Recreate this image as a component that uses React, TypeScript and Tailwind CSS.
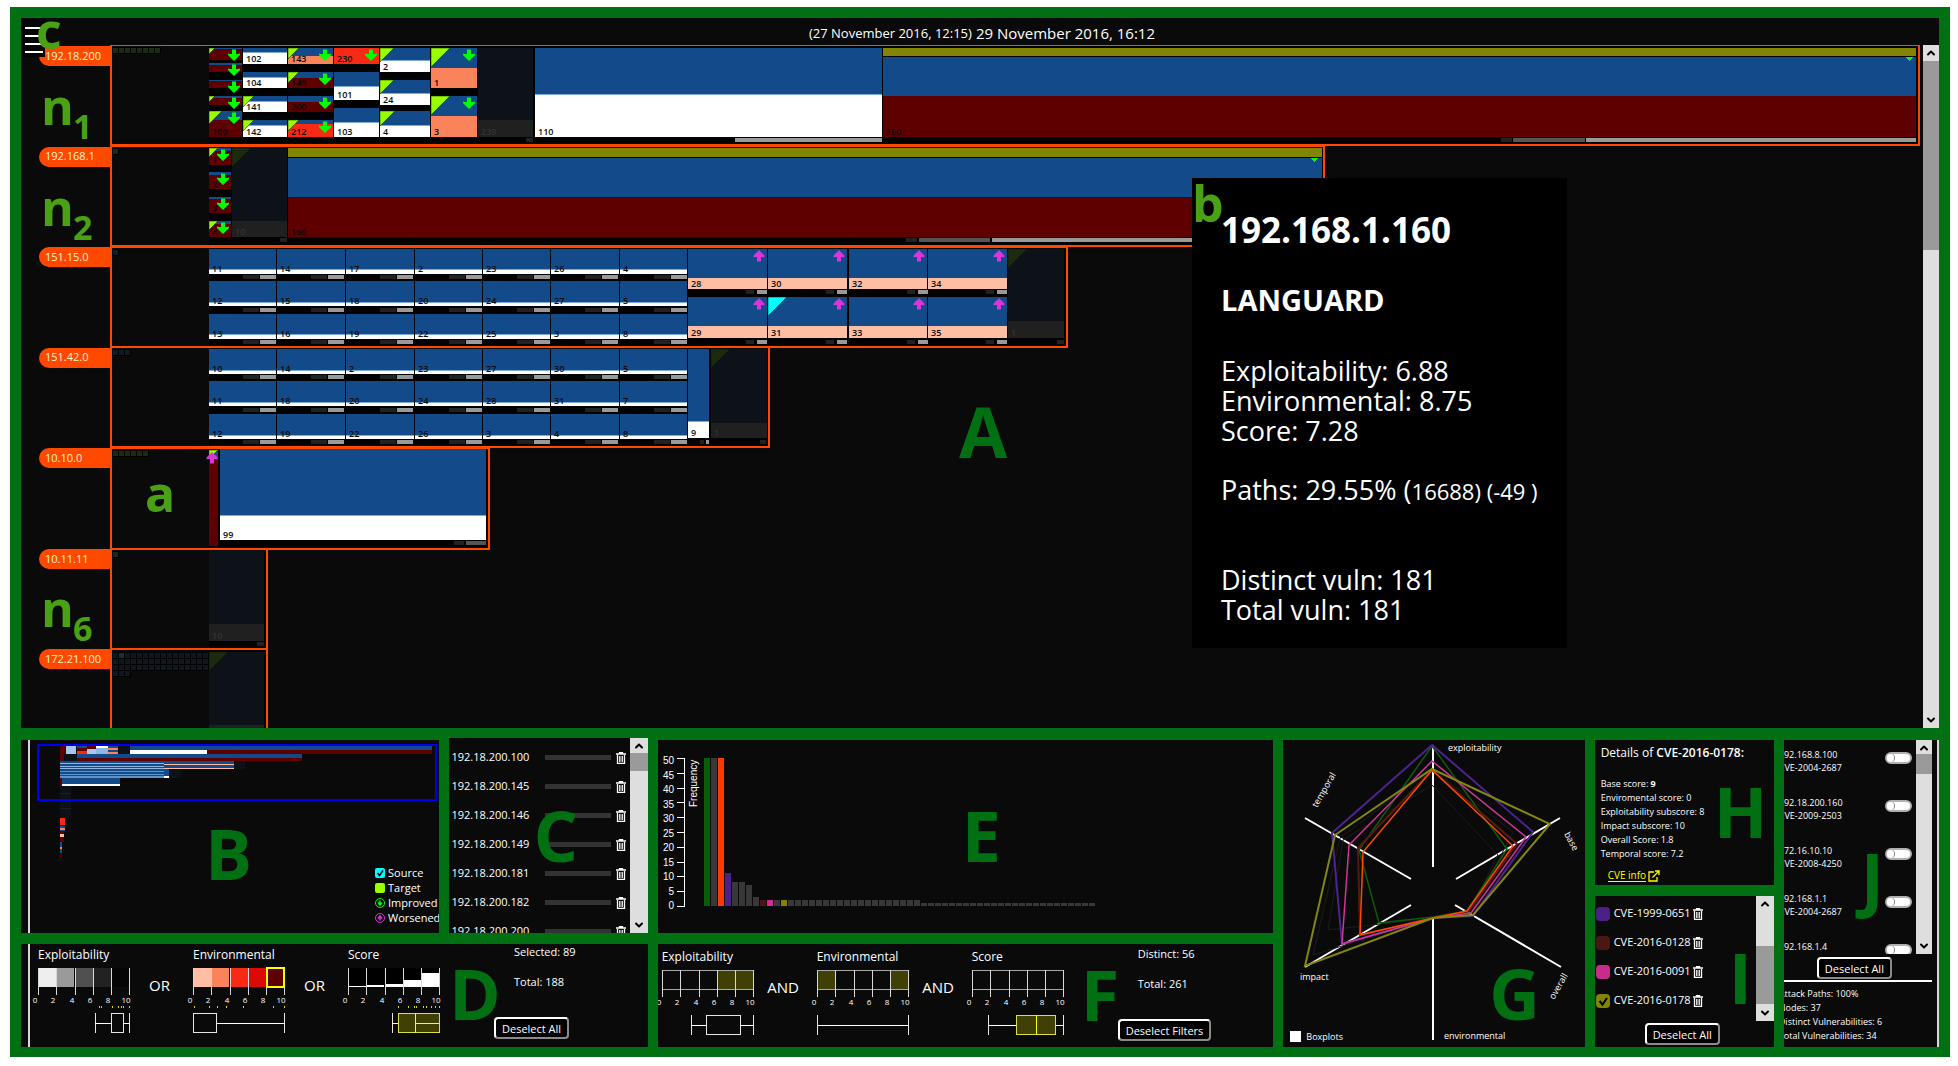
import React from "react";
import { ChevronUp, ChevronDown } from "lucide-react";

const BLUE = "#124a8a";
const DRED = "#5e0000";
const WHITE = "#ffffff";
const SALMON = "#fb835c";
const PEACH = "#ffbda3";
const RED = "#f92a14";
const LIME = "#99ff00";
const CYAN = "#00ffff";
const OLIVE = "#838304";

type Cell = {
  x: number; y: number; r: number; b: number; split: number; fill: string;
  label?: string; tri?: string; ts?: number; arrow?: "up" | "down"; faded?: boolean;
};

const c = (x: number, r: number, y: number, b: number, split: number, fill: string, label?: string, extra: Partial<Cell> = {}): Cell => ({ x, r, y, b, split, fill, label, ...extra });

const grid3 = (tops: number[], splits: number[], labels: string[][]): Cell[] =>
  labels.flatMap((col, i) => {
    const xs = [209, 277, 346, 415, 483, 551, 620, 688];
    return col.map((l, j) => c(xs[i], xs[i + 1] - 1, tops[j], tops[j] + 25, splits[j], WHITE, l));
  });

const cells: Cell[] = [
  c(209, 242, 48, 60, 49, DRED, undefined, { tri: LIME, ts: 6, arrow: "down" }),
  c(209, 242, 63, 72, 65, DRED, undefined, { arrow: "down" }),
  c(209, 242, 80, 88, 81, DRED, undefined, { arrow: "down" }),
  c(209, 242, 96, 105, 98, DRED, undefined, { tri: LIME, ts: 6, arrow: "down" }),
  c(209, 242, 111, 137, 120, DRED, "100", { tri: LIME, ts: 13, arrow: "down" }),
  c(243, 287, 48, 64, 52, WHITE, "102"),
  c(243, 287, 72, 88, 77, WHITE, "104"),
  c(243, 287, 96, 112, 101, WHITE, "141", { tri: LIME, ts: 11 }),
  c(243, 287, 120, 137, 125, WHITE, "142", { tri: LIME, ts: 11 }),
  c(288, 333, 48, 64, 56, SALMON, "143", { tri: LIME, ts: 11, arrow: "down" }),
  c(288, 333, 72, 88, 78, DRED, "149", { tri: LIME, ts: 11, arrow: "down" }),
  c(288, 333, 96, 112, 102, DRED, "200", { arrow: "down" }),
  c(288, 333, 120, 137, 124, RED, "212", { tri: LIME, ts: 11, arrow: "down" }),
  c(334, 379, 48, 64, 48, RED, "230", { arrow: "down" }),
  c(334, 379, 72, 100, 86, WHITE, "101"),
  c(334, 379, 108, 137, 122, WHITE, "103"),
  c(380, 430, 48, 72, 60, WHITE, "2", { tri: LIME, ts: 14 }),
  c(380, 430, 80, 105, 93, WHITE, "24", { tri: LIME, ts: 14 }),
  c(380, 430, 111, 137, 125, WHITE, "4", { tri: LIME, ts: 15 }),
  c(431, 477, 48, 88, 68, SALMON, "1", { tri: LIME, ts: 19, arrow: "down" }),
  c(431, 477, 96, 137, 116, SALMON, "3", { tri: LIME, ts: 19, arrow: "down" }),
  c(478, 533, 48, 137, 120, "", "239", { faded: true }),
  c(535, 882, 48, 137, 94, WHITE, "110"),
  c(883, 1916, 57, 137, 96, DRED, "160"),
  c(209, 231, 148, 165, 151, DRED, "1", { tri: LIME, ts: 9, arrow: "down" }),
  c(209, 231, 172, 189, 175, DRED, "2", { arrow: "down" }),
  c(209, 231, 197, 213, 199, DRED, "3", { arrow: "down" }),
  c(209, 231, 221, 237, 224, DRED, "4", { tri: LIME, ts: 9, arrow: "down" }),
  c(232, 287, 148, 237, 221, "", "10", { faded: true, tri: "#1c2a10", ts: 19 }),
  c(288, 1322, 158, 237, 197, DRED, "160"),
  ...grid3([249, 281, 314], [269, 302, 334], [["11", "12", "13"], ["14", "15", "16"], ["17", "18", "19"], ["2", "20", "22"], ["23", "24", "25"], ["26", "27", "3"], ["4", "5", "8"]]),
  ...[["28", "29"], ["30", "31"], ["32", "33"], ["34", "35"]].flatMap((p, i) => {
    const x = [688, 768, 849, 928][i];
    const r = [767, 847, 927, 1007][i];
    return [
      c(x, r, 249, 289, 278, PEACH, p[0], { arrow: "up" }),
      c(x, r, 297, 338, 326, PEACH, p[1], { arrow: "up", tri: p[1] === "31" ? CYAN : undefined, ts: 19 }),
    ];
  }),
  c(1008, 1064, 249, 338, 321, "", "1", { faded: true, tri: "#1c2a10", ts: 19 }),
  ...grid3([349, 381, 414], [370, 402, 435], [["10", "11", "12"], ["14", "18", "19"], ["2", "20", "22"], ["23", "24", "26"], ["27", "28", "3"], ["30", "31", "4"], ["5", "7", "8"]]),
  c(688, 709, 349, 438, 421, WHITE, "9"),
  c(711, 767, 349, 438, 423, "", "1", { faded: true, tri: "#1c2a10", ts: 19 }),
  c(209, 218, 450, 546, 459, DRED, undefined, { tri: LIME, ts: 9 }),
  c(220, 486, 449, 540, 515, WHITE, "99"),
  c(209, 264, 550, 641, 624, "", "10", { faded: true }),
  c(209, 264, 652, 743, 725, "", undefined, { faded: true, tri: "#1c2a10", ts: 19 }),
];

const G1 = "#222222", G2 = "#555555", G3 = "#9a9a9a";
// Strips under the cells: left, right, top, colour
const strips: [number, number, number, string][] = [
  [526, 533, 138, G1], [735, 882, 138, G3], [1501, 1512, 138, G1], [1513, 1585, 138, G2], [1586, 1916, 138, G3],
  [280, 287, 238, G1], [906, 917, 238, G1], [919, 990, 238, G2], [992, 1322, 238, G3],
  ...[275, 308, 340, 375, 408, 440].flatMap((y) =>
    [209, 277, 346, 415, 483, 551, 620].flatMap((x): [number, number, number, string][] => [[x + 34, x + 50, y, G1], [x + 51, x + 67, y, G3]])),
  ...[290, 340].flatMap((y) =>
    [688, 768, 849, 928].flatMap((x): [number, number, number, string][] => [[x + 58, x + 66, y, G1], [x + 69, x + 79, y, G3]])),
  [1057, 1064, 340, G1], [700, 704, 440, G1], [706, 709, 440, G3], [760, 766, 440, G1],
  [454, 464, 541, G1], [466, 486, 541, G2], [257, 264, 642, G1],
];

const frames: [number, number, number][] = [
  [1919, 45, 145], [1324, 146, 246], [1067, 247, 347], [769, 347, 447], [489, 448, 549], [267, 549, 649], [267, 649, 760],
];

const minis: [number, number, string][] = [[8, 47, "#1a2b12"], [1, 148, "#1a2b12"], [1, 249, "#0f1c28"], [3, 349, "#0f1c28"], [6, 450, "#1a2b12"], [1, 551, "#1a2b12"], [16, 652, "#0f1820"], [16, 658, "#0f1820"], [16, 664, "#0f1820"], [3, 670, "#0f1820"]];

const Arrow = ({ x, y, dir }: { x: number; y: number; dir: "up" | "down" }) => (
  <path
    d={dir === "down" ? "M-2 -5.500h4v4.500h2l2 -.5v1.500L0 6L-6 0v-1.500l2 .5h2z" : "M-2 5.500h4v-4.500h2l1.500 .5v-2L0 -6L-5.500 -.5v2l1.500 -.5h2z"}
    transform={`translate(${x} ${y})`}
    fill={dir === "down" ? "#00ff00" : "#d936d9"}
  />
);

function NetworkChart() {
  return (
    <svg className="h-full min-w-0 flex-1 overflow-hidden" role="img" aria-label="Attack surface by subnet">
      <g transform="translate(-110 -45)" shapeRendering="crispEdges">
        {frames.map(([r, t, b], i) => (
          <g key={i}>
            <rect x={209} y={t + 1} width={r - 209} height={b - t - 1} fill="#020202" />
            <rect x={111} y={t} width={r - 111} height={b - t} fill="none" stroke="#ff4800" strokeWidth={2} />
          </g>
        ))}
        {minis.map(([n, y, f], i) =>
          Array.from({ length: n }, (_, k) => (
            <rect key={`${i}-${k}`} x={112 + k * 6} y={y} width={6} height={6} fill={i === 6 && k === 1 ? "#0b3440" : f} stroke="#000000" />
          )))}
        {strips.map(([l, r, y, f], i) => <rect key={i} x={l} y={y} width={r - l} height={4} fill={f} />)}
        <rect x={883} y={48} width={1033} height={8} fill={OLIVE} />
        <rect x={288} y={148} width={1034} height={9} fill={OLIVE} />
        {cells.map((d, i) => (
          <g key={i}>
            <rect x={d.x} y={d.y} width={d.r - d.x} height={d.split - d.y} fill={d.faded ? "#0d1219" : BLUE} />
            <rect x={d.x} y={d.split} width={d.r - d.x} height={d.b - d.split} fill={d.faded ? "#202020" : d.fill} />
            {d.fill === WHITE && <rect x={d.x} y={d.split} width={d.r - d.x} height={1} fill="#7fa9d6" />}
            {d.tri && d.ts && <path d={`M${d.x} ${d.y}h${d.ts}l${-d.ts} ${d.ts}z`} fill={d.tri} stroke="#0a1400" strokeWidth={0.5} shapeRendering="auto" />}
          </g>
        ))}
        <path d="M1905 57h8l-4 4zM1310 158h8l-4 4z" fill="#00ff00" />
      </g>
      <g transform="translate(-110 -45)" className="font-semibold">
        {cells.filter((d) => d.label).map((d, i) => (
          <text key={i} x={d.x + 3} y={d.b - 2} fontSize={9} fill={d.faded ? "#343434" : "#0a0a0a"}>{d.label}</text>
        ))}
        {cells.filter((d) => d.arrow).map((d, i) => (
          <Arrow key={i} x={d.r - 8} y={d.y + 7} dir={d.arrow!} />
        ))}
        <Arrow x={212} y={458} dir="up" />
      </g>
    </svg>
  );
}

function Mark({ className, children }: { className: string; children: React.ReactNode }) {
  return <span aria-hidden="true" className={`pointer-events-none absolute text-[70px] leading-none font-bold text-[#007012] ${className}`}>{children}</span>;
}

function SmallMark({ className, sub, children }: { className: string; sub?: string; children: React.ReactNode }) {
  return (
    <span aria-hidden="true" className={`pointer-events-none absolute text-[50px] leading-none font-bold text-[#4aa115] ${className}`}>
      {children}
      {sub && <span className="absolute top-7 left-8 text-[34px] leading-none">{sub}</span>}
    </span>
  );
}

function Scroll({ className, thumb }: { className: string; thumb: string }) {
  return (
    <div aria-hidden="true" className={`relative flex shrink-0 flex-col justify-between overflow-hidden bg-[#dedede] text-black ${className}`}>
      <ChevronUp className="mx-auto h-4 w-3 shrink-0" strokeWidth={4} />
      <div className={`absolute inset-x-0 bg-[#9a9a9a] ${thumb}`} />
      <ChevronDown className="mx-auto h-4 w-3 shrink-0" strokeWidth={4} />
    </div>
  );
}

function Btn({ children }: { children: React.ReactNode }) {
  return (
    <button type="button" className="h-[22px] rounded-sm border-2 border-t-white border-r-[#8a8a8a] border-b-[#8a8a8a] border-l-white bg-black px-1.5 text-[11px] leading-none whitespace-nowrap text-white">
      {children}
    </button>
  );
}

const Trash = () => (
  <svg viewBox="0 0 10 12" className="h-3 w-2.5 shrink-0" aria-hidden="true">
    <path d="M0 2h10M3.500 2V0.500h3V2M1.500 3v8.500h7V3M3.800 4v6M6.200 4v6" fill="none" stroke="#fff" strokeWidth={1.3} />
  </svg>
);

const miniRects: [number, number, number, number, string][] = [
  [60, 746, 5, 8, DRED], [66, 746, 10, 8, "#a9c7ee"], [77, 746, 10, 2, BLUE], [77, 748, 10, 3, DRED], [77, 751, 10, 3, RED],
  [87, 746, 9, 3, DRED], [87, 749, 9, 5, "#a9c7ee"], [96, 746, 12, 2, WHITE], [96, 748, 12, 6, "#8fb5e0"],
  [108, 746, 10, 2, BLUE], [108, 748, 10, 2, SALMON], [108, 750, 10, 2, BLUE], [108, 752, 10, 2, SALMON], [119, 746, 10, 8, "#0d1219"],
  [130, 746, 77, 4, BLUE], [130, 750, 77, 4, WHITE], [207, 746, 225, 4, BLUE], [207, 750, 225, 4, DRED],
  [60, 754, 4, 7, DRED], [65, 754, 12, 7, "#0d1219"], [77, 754, 225, 4, BLUE], [77, 758, 225, 3, DRED],
  [60, 761, 174, 17, BLUE], [164, 769, 70, 9, "#0a0a0a"], [164, 769, 5, 7, BLUE], [164, 776, 5, 2, WHITE],
  [60, 763, 104, 1, "#8fb5e0"], [60, 766, 104, 1, "#8fb5e0"], [60, 768, 104, 1, "#8fb5e0"], [60, 771, 104, 1, "#5d93cb"], [60, 774, 104, 1, "#5d93cb"], [60, 776, 104, 2, "#5d93cb"],
  [164, 764, 70, 1, PEACH], [164, 768, 70, 1, PEACH], [234, 761, 11, 8, "#0d1219"], [169, 770, 12, 8, "#0d1219"],
  [60, 778, 2, 8, DRED], [62, 778, 58, 6, BLUE], [62, 784, 58, 2, WHITE],
  [60, 786, 11, 32, "#0d1219"], [60, 793, 11, 1, "#202020"], [60, 800, 11, 1, "#202020"], [60, 808, 11, 1, "#202020"],
  [60, 818, 5, 7, RED], [60, 826, 5, 2, BLUE], [60, 828, 5, 2, SALMON], [60, 830, 5, 1, BLUE], [60, 831, 4, 3, DRED],
  [60, 834, 4, 3, PEACH], [60, 837, 4, 5, DRED], [60, 842, 2, 5, BLUE], [60, 847, 2, 2, SALMON], [60, 849, 2, 4, BLUE], [60, 853, 2, 5, DRED],
];

function Legend() {
  const items: [string, string, React.ReactNode][] = [
    ["Source", "bg-[#00ffff] rounded-xs", <path key="p" d="M2.500 5l2 2.500L8 2.500" fill="none" stroke="#000" strokeWidth={1.6} />],
    ["Target", "bg-[#99ff00] rounded-xs", null],
    ["Improved", "border border-[#00ff00] rounded-full", <path key="p" d="M4 1.500v3M2 3.500l2 2.500L6 3.500" fill="none" stroke="#00ff00" strokeWidth={1.5} />],
    ["Worsened", "border border-[#d936d9] rounded-full", <path key="p" d="M4 6.500v-3M2 4.500l2-2.500L6 4.500" fill="none" stroke="#d936d9" strokeWidth={1.5} />],
  ];
  return (
    <div className="absolute bottom-2 left-[354px] flex flex-col text-[11px] leading-[15px]">
      {items.map(([name, cls, mark], i) => (
        <label key={name} className="flex items-center gap-[3px] whitespace-nowrap">
          <span className={`relative block size-[10px] ${cls}`}>
            <input type="checkbox" defaultChecked={i === 0} className="absolute inset-0 size-full appearance-none" />
            <svg viewBox={i < 2 ? "0 0 10 10" : "0 0 8 8"} className="pointer-events-none absolute inset-0 size-full">{mark}</svg>
          </span>
          {name}
        </label>
      ))}
    </div>
  );
}

type FilterSpec = {
  title: string; fills: string[]; whisker: [number, number]; box?: [number, number]; mid?: number;
  hot?: [number, number]; marks?: number[]; lines?: boolean; bars?: number[]; picked?: number;
};

function Filter({ title, fills, whisker, box, mid, hot, marks = [], lines, bars, picked }: FilterSpec) {
  const xs = [0, 18, 37, 55, 73, 91];
  return (
    <div className="w-[92px] shrink-0">
      <h3 className="h-5 text-xs leading-5">{title}</h3>
      <svg width={92} height={70} className="overflow-visible" role="img" aria-label={`${title} filter`}>
        <g shapeRendering="crispEdges">
          {fills.map((f, i) => <rect key={i} x={xs[i]} y={3} width={18} height={19} fill={f} />)}
          {bars && bars.map((h, i) => <rect key={i} x={xs[i]} y={22 - h} width={18} height={h} fill="#fff" />)}
          {lines && <path d="M0 3.500H92M0 22.500H92" stroke="#a8a8a8" />}
          {xs.map((x) => <path key={x} d={`M${x + 0.5} 3v27`} stroke="#d8d8d8" />)}
          {picked !== undefined && <rect x={xs[picked] + 1} y={3} width={17} height={19} fill="none" stroke="#ffff00" strokeWidth={2} />}
          {marks.map((x, i) => <rect key={i} x={x} y={41} width={1} height={2} fill="#d8d800" />)}
          {hot && <rect x={hot[0]} y={48} width={hot[1] - hot[0]} height={20} fill="#404005" />}
          <path d={`M${whisker[0] + 0.5} 48v20M${whisker[1] + 0.5} 48v20`} stroke="#e6e6e6" />
          {box ? (
            <>
              <path d={`M${whisker[0]} 58.500H${box[0]}M${box[1]} 58.500H${whisker[1]}`} stroke="#fff" />
              <rect x={box[0] + 0.5} y={48.5} width={box[1] - box[0]} height={19} fill="none" stroke={hot ? "#dcdc50" : "#e6e6e6"} />
            </>
          ) : (
            <path d={`M${whisker[0]} 58.500H${whisker[1]}`} stroke="#fff" />
          )}
          {mid !== undefined && <path d={`M${mid + 0.5} 48v20`} stroke="#ffff00" />}
          {bars && <path d="M67 58.500H91" stroke="#ffff00" />}
        </g>
        {["0", "2", "4", "6", "8", "10"].map((t, i) => (
          <text key={t} x={xs[i] - 3} y={38} fontSize={8} fill="#fff" textAnchor="middle">{t}</text>
        ))}
      </svg>
    </div>
  );
}

function FilterRow({ specs, word, info, action }: { specs: FilterSpec[]; word: string; info: string[]; action: string }) {
  return (
    <div className="flex">
      {specs.map((s, i) => (
        <React.Fragment key={s.title}>
          {i > 0 && <span className="flex h-[81px] w-[63px] shrink-0 items-center justify-center pr-1 text-[15px]">{word}</span>}
          <Filter {...s} />
        </React.Fragment>
      ))}
      <div className="ml-[54px] flex flex-col items-start text-[11px] leading-[30px] whitespace-nowrap">
        <div className="-mt-2 mb-5 ml-5">
          {info.map((t) => <p key={t}>{t}</p>)}
        </div>
        <Btn>{action}</Btn>
      </div>
    </div>
  );
}

const nodeFilters: FilterSpec[] = [
  { title: "Exploitability", fills: ["#eeeeee", "#9a9a9a", "#505050", "#222222", "#050505"], whisker: [57, 91], box: [73, 85], marks: [61, 63, 74, 80, 83, 85, 91] },
  { title: "Environmental", fills: ["#ffbda3", "#fb835c", "#f92a14", "#dc0a05", "#5c0000"], whisker: [0, 91], box: [0, 23], marks: [1, 16, 24, 33, 50, 80, 91], picked: 4 },
  { title: "Score", fills: ["#000", "#000", "#000", "#000", "#000"], bars: [1, 2, 3, 7, 14], whisker: [44, 91], box: [50, 91], mid: 67, hot: [50, 91], marks: [50, 60, 66, 68, 75, 78, 83, 87, 91] },
];
const vulnFilters: FilterSpec[] = [
  { title: "Exploitability", fills: ["none", "none", "none", "#404005", "#404005"], whisker: [29, 91], box: [44, 78], lines: true },
  { title: "Environmental", fills: ["#404005", "none", "none", "none", "#404005"], whisker: [0, 91], lines: true },
  { title: "Score", fills: ["none", "none", "none", "none", "none"], whisker: [16, 91], box: [44, 83], mid: 64, hot: [44, 83], lines: true },
];

const freq = [50, 50, 50, 11, 8, 8, 7, 3, ...Array(23).fill(2), ...Array(25).fill(1)] as number[];
const freqColor: Record<number, string> = { 0: "#0a5c0a", 2: "#ff3a00", 3: "#4b2087", 8: "#4a1712", 9: "#d02f90", 11: OLIVE };

function Histogram() {
  return (
    <svg className="h-full w-full font-['Liberation_Sans',sans-serif]" role="img" aria-label="Vulnerability frequency">
      {[0, 5, 10, 15, 20, 25, 30, 35, 40, 45, 50].map((v) => (
        <g key={v}>
          <text x={16} y={169 - v * 2.9} fontSize={10} fill="#fff" textAnchor="end">{v}</text>
          <rect x={19} y={Math.round(166 - v * 2.96)} width={7} height={1} fill="#fff" />
        </g>
      ))}
      <rect x={26} y={18} width={1} height={149} fill="#fff" />
      <text transform="translate(39 67) rotate(-90)" fontSize={10} fill="#fff">Frequency</text>
      {freq.map((v, i) => (
        <rect key={i} x={46 + i * 7} y={166 - Math.round(v * 2.96)} width={6} height={Math.round(v * 2.96)} fill={freqColor[i] ?? "#383838"} />
      ))}
    </svg>
  );
}

function Radar() {
  const shapes: [string, string, number][] = [
    ["149,45 215,115 186,172 150,178 45,190 60,100", "#1c1c1c", 1],
    ["149,29 230,92 188,173 150,178 30,215 57,98", "#1c1c1c", 1],
    ["149,6 224,109 184,171 150,177 96,183 76,110", "#0c5c0c", 1.5],
    ["149,5 250,92 190,176 150,178 59,204 49,93", "#4b2490", 2],
    ["149,30 234,104 186,171 150,178 77,195 75,108", "#561a10", 2],
    ["149,21 243,97 188,173 150,178 59,204 66,105", "#d0359a", 1.5],
    ["149,30 230,106 184,171 150,178 77,195 80,112", "#ff4a00", 1.5],
    ["149,29 267,84 190,175 150,178 22,226 52,95", "#858510", 2],
  ];
  return (
    <svg className="h-full w-full" role="img" aria-label="CVE metrics radar">
      <path d="M150 5V127M150 178V300M277 78L173 139M22 78L128 139M172 165L278 227M128 165L22 227" stroke="#fff" strokeWidth={2} />
      {shapes.map(([p, s, w], i) => <polygon key={i} points={p} fill="none" stroke={s} strokeWidth={w} />)}
      <g fill="#fff" fontSize={9}>
        <text x={165} y={11}>exploitability</text>
        <text x={161} y={299}>environmental</text>
        <text x={17} y={240}>impact</text>
        <text transform="translate(34 68) rotate(-60)">temporal</text>
        <text transform="translate(281 94) rotate(62)">base</text>
        <text transform="translate(271 260) rotate(-60)">overall</text>
      </g>
    </svg>
  );
}

const Panel = ({ className = "", children }: { className?: string; children: React.ReactNode }) => (
  <section className={`relative min-w-0 overflow-hidden bg-[#0a0a0a] ${className}`}>{children}</section>
);

export default function App() {
  const subnets = ["192.18.200", "192.168.1", "151.15.0", "151.42.0", "10.10.0", "10.11.11", "172.21.100"];
  const hosts = ["100", "145", "146", "149", "181", "182", "200"];
  const cves: [string, string][] = [["CVE-1999-0651", "bg-[#4b2087]"], ["CVE-2016-0128", "bg-[#4a1712]"], ["CVE-2016-0091", "bg-[#c62d8a]"], ["CVE-2016-0178", "bg-[#838304]"]];
  const links = [["192.168.8.100", "CVE-2004-2687"], ["192.18.200.160", "CVE-2009-2503"], ["172.16.10.10", "CVE-2008-4250"], ["192.168.1.1", "CVE-2004-2687"], ["192.168.1.4", ""]];

  return (
    <div className="flex min-h-screen flex-col bg-white pt-[7px] pr-2 pb-[9px] pl-2.5 font-['Open_Sans','Noto_Sans',sans-serif] text-white">
      <main className="flex flex-1 flex-col gap-3 bg-[#007012] pt-[11px] pr-[11px] pb-2.5 pl-[11px]">
        <Panel className="flex flex-1 flex-col">
          <header className="flex h-[27px] items-center justify-center gap-1 pt-1 pl-1 text-[15px]">
            <span className="text-[13px]">(27 November 2016, 12:15)</span>
            <span>29 November 2016, 16:12</span>
          </header>
          <div className="flex h-[683px]">
            <ul className="grid h-[704px] w-[89px] shrink-0 grid-rows-7 pl-[18px]">
              {subnets.map((s) => (
                <li key={s} className="pt-px">
                  <button type="button" className="flex h-5 w-full items-center rounded-l-full bg-[#ff4800] pl-1.5 text-[11px] text-[#fff3c8]">{s}</button>
                </li>
              ))}
            </ul>
            <NetworkChart />
            <Scroll className="w-4" thumb="top-4 h-[189px]" />
          </div>
          <button type="button" aria-label="Menu" className="absolute top-0 left-0 flex h-[39px] w-6 flex-col items-start gap-[6px] bg-[#050505] pt-[9px] pl-1">
            {[0, 1, 2, 3].map((i) => <span key={i} className="block h-0.5 w-[18px] bg-white" />)}
          </button>
          <SmallMark className="-top-[13px] left-[15px]">c</SmallMark>
          <SmallMark className="top-[63px] left-5" sub="1">n</SmallMark>
          <SmallMark className="top-[164px] left-5" sub="2">n</SmallMark>
          <SmallMark className="top-[565px] left-5" sub="6">n</SmallMark>
          <SmallMark className="top-[450px] left-[124px]">a</SmallMark>
          <Mark className="top-[378px] left-[938px]">A</Mark>
          <aside className="absolute top-40 left-[1171px] h-[470px] w-[375px] bg-black pt-[30px] pl-[29px] text-[27px] leading-[30px] whitespace-nowrap">
            <h2 className="text-[35px] leading-[44px] font-bold">192.168.1.160</h2>
            <h2 className="mt-[28px] mb-9 text-[29px] leading-[40px] font-bold">LANGUARD</h2>
            <p>Exploitability: 6.88</p>
            <p>Environmental: 8.75</p>
            <p>Score: 7.28</p>
            <p className="mt-[29px]">Paths: 29.55% (<span className="text-[22px]">16688) (-49 )</span></p>
            <p className="mt-[59px]">Distinct vuln: 181</p>
            <p>Total vuln: 181</p>
            <SmallMark className="top-0 left-0">b</SmallMark>
          </aside>
        </Panel>

        <div className="grid grid-cols-[418fr_198fr_615fr_301fr_179fr_155fr] grid-rows-[193px_103px] gap-x-2.5 gap-y-[11px]">
          <Panel>
            <div className="absolute inset-y-0 left-[7px] w-0.5 bg-[#d8d8d8]" />
            <svg className="h-full w-full" role="img" aria-label="Network overview">
              <g transform="translate(-21 -740)" shapeRendering="crispEdges">
                {miniRects.map(([x, y, w, h, f], i) => <rect key={i} x={x} y={y} width={w} height={h} fill={f} />)}
                <rect x={38} y={745} width={398} height={55} fill="none" stroke="#0000f0" strokeWidth={2} />
              </g>
            </svg>
            <Legend />
            <Mark className="top-[78px] left-[184px]">B</Mark>
          </Panel>

          <Panel className="-mt-0.5 flex">
            <ul className="min-w-0 flex-1 pt-[5px] pl-0.5">
              {hosts.map((h) => (
                <li key={h} className="flex h-[29px] items-center text-[11px]">
                  <span className="w-[94px]">192.18.200.{h}</span>
                  <span className="h-[5px] w-[66px] bg-[#333333]" />
                  <button type="button" aria-label={`Remove 192.18.200.${h}`} className="ml-[5px]"><Trash /></button>
                </li>
              ))}
            </ul>
            <Scroll className="w-[18px]" thumb="top-[15px] h-[18px]" />
            <Mark className="top-[62px] left-[84px]">C</Mark>
          </Panel>

          <Panel><Histogram /><Mark className="top-[60px] left-[304px]">E</Mark></Panel>

          <Panel className="row-span-2">
            <Radar />
            <label className="absolute bottom-1 left-[7px] flex items-center gap-[5px] text-[9px]">
              <input type="checkbox" className="size-[11px] appearance-none bg-white" />
              Boxplots
            </label>
            <Mark className="top-[218px] left-[206px]">G</Mark>
          </Panel>

          <div className="row-span-2 flex min-w-0 flex-col gap-[11px]">
            <Panel className="h-[145px] pt-[5px] pl-1.5 whitespace-nowrap">
              <h3 className="mb-4 text-xs leading-4">Details of <b className="font-semibold">CVE-2016-0178:</b></h3>
              <div className="text-[9px] leading-[14px]">
                <p>Base score: <b>9</b></p>
                <p>Enviromental score: 0</p>
                <p>Exploitability subscore: 8</p>
                <p>Impact subscore: 10</p>
                <p>Overall Score: 1.8</p>
                <p>Temporal score: 7.2</p>
              </div>
              <a href="#cve" className="mt-2 ml-[7px] flex items-center gap-0.5 text-[10px] leading-3 text-[#ffff00]">
                <span className="border-b border-[#ffff00]">CVE info</span>
                <svg viewBox="0 0 12 12" className="size-3"><path d="M6 2H1v9h8V7M4.500 7.500L11 1M7 1h4v4" fill="none" stroke="#ffff00" strokeWidth={1.3} /></svg>
              </a>
              <Mark className="top-9 left-[119px]">H</Mark>
            </Panel>
            <Panel className="flex-1">
              <div className="flex h-[125px]">
                <ul className="flex-1 pt-[3px] pl-px">
                  {cves.map(([name, bg], i) => (
                    <li key={name} className="flex h-[29px] items-center text-[11px] whitespace-nowrap">
                      <label className="flex items-center gap-1">
                        <span className={`relative block size-[14px] rounded-sm ${bg}`}>
                          <input type="checkbox" defaultChecked={i === 3} className="absolute inset-0 size-full appearance-none" />
                          {i === 3 && <svg viewBox="0 0 14 14" className="pointer-events-none absolute inset-0 size-full"><path d="M3.500 7l3 3.500L11 4" fill="none" stroke="#000" strokeWidth={2} /></svg>}
                        </span>
                        {name}
                      </label>
                      <button type="button" aria-label={`Remove ${name}`} className="ml-0.5"><Trash /></button>
                    </li>
                  ))}
                </ul>
                <Scroll className="w-[18px]" thumb="top-[50px] h-[58px]" />
              </div>
              <div className="mt-0.5 ml-[50px] flex"><Btn>Deselect All</Btn></div>
              <Mark className="top-[46px] left-[134px]">I</Mark>
            </Panel>
          </div>

          <Panel className="row-span-2">
            <div className="flex h-[214px] w-[148px] overflow-hidden">
              <ul className="-ml-[5px] flex-1 pt-2">
                {links.map(([ip, cve], i) => (
                  <li key={i} className="flex h-12 items-start justify-between pr-1 text-[9px] leading-[13px] whitespace-nowrap">
                    <label htmlFor={`path-${i}`}>{ip}<br />{cve}</label>
                    <input id={`path-${i}`} type="checkbox" className="relative mt-1 h-3 w-[27px] appearance-none rounded-full border-2 border-[#b0b0b0] bg-white before:absolute before:top-0 before:left-0 before:size-2 before:rounded-full before:border-r before:border-[#8a8a8a] before:bg-white" />
                  </li>
                ))}
              </ul>
              <Scroll className="w-4" thumb="top-[14px] h-5" />
            </div>
            <div className="mt-[3px] ml-[33px] flex"><Btn>Deselect All</Btn></div>
            <div className="mt-px h-0.5 w-[148px] bg-white" />
            <div className="mt-[5px] -ml-[5px] text-[9px] leading-[14px] whitespace-nowrap">
              <p>Attack Paths: 100%</p>
              <p>Nodes: 37</p>
              <p>Distinct Vulnerabilities: 6</p>
              <p>Total Vulnerabilities: 34</p>
            </div>
            <div className="absolute inset-y-0 right-0 w-0.5 bg-[#d8d8d8]" />
            <Mark className="top-[102px] left-[77px]">J</Mark>
          </Panel>

          <Panel className="col-span-2 col-start-1 row-start-2 pt-px pl-[17px]">
            <div className="absolute inset-y-0 left-[7px] w-0.5 bg-[#d8d8d8]" />
            <FilterRow specs={nodeFilters} word="OR" info={["Selected: 89", "Total: 188"]} action="Deselect All" />
            <Mark className="top-[14px] left-[428px]">D</Mark>
          </Panel>

          <Panel className="col-start-3 row-start-2 pt-[3px] pl-[4px]">
            <FilterRow specs={vulnFilters} word="AND" info={["Distinct: 56", "Total: 261"]} action="Deselect Filters" />
            <Mark className="top-[15px] left-[423px]">F</Mark>
          </Panel>
        </div>
      </main>
    </div>
  );
}
